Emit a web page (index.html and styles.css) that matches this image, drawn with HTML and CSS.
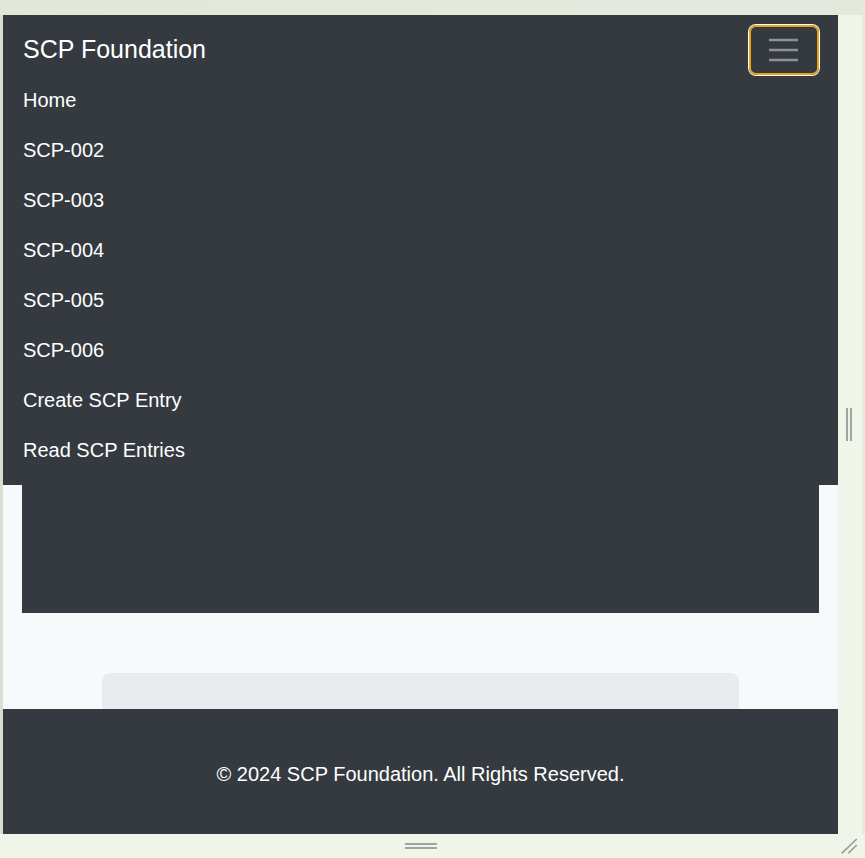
FILE: index.html
```html
<!DOCTYPE html>
<html lang="en">
<head>
<meta charset="utf-8">
<title>SCP Foundation</title>
<link rel="stylesheet" href="styles.css">
</head>
<body>
<div class="top-band"></div>
<div class="left-strip"></div>
<div class="page">
  <nav class="navbar">
    <div class="nav-head">
      <a class="brand" href="#">SCP Foundation</a>
      <button class="toggler" type="button" aria-label="Toggle navigation">
        <svg width="30" height="30" viewBox="0 0 30 30"><path d="M0 5h29M0 15h29M0 25h29" stroke="#8f9296" stroke-width="2.4"/></svg>
      </button>
    </div>
    <ul class="nav-list">
      <li><a href="#">Home</a></li>
      <li><a href="#">SCP-002</a></li>
      <li><a href="#">SCP-003</a></li>
      <li><a href="#">SCP-004</a></li>
      <li><a href="#">SCP-005</a></li>
      <li><a href="#">SCP-006</a></li>
      <li><a href="#">Create SCP Entry</a></li>
      <li><a href="#">Read SCP Entries</a></li>
    </ul>
  </nav>
  <div class="hero-wrap"><div class="hero"></div></div>
  <div class="card-wrap"><div class="card"></div></div>
  <footer class="footer">© 2024 SCP Foundation. All Rights Reserved.</footer>
</div>
<div class="gutter"><span class="vgrip"></span></div>
<div class="bottom-left"></div>
<div class="bottom-mid"><span class="hgrip"></span></div>
<div class="bottom-right">
  <svg width="27" height="24" viewBox="0 0 27 24"><path d="M3.7 19.3L18.7 5M10.3 19.3L18.7 11" stroke="#9a9a9a" stroke-width="1.6" fill="none"/></svg>
</div>
</body>
</html>
```

FILE: styles.css
```css
html, body {
  margin: 0;
  padding: 0;
}
body {
  width: 865px;
  height: 858px;
  overflow: hidden;
  background: #eff5e9;
  display: grid;
  grid-template-columns: 3px 835px 27px;
  grid-template-rows: 15px 819px 24px;
  font-family: "Liberation Sans", Arial, sans-serif;
}
.top-band {
  grid-column: 1 / 4;
  background: linear-gradient(90deg, #e1e7d9, #e3e9dc);
}
.left-strip {
  background: #d9dfd0;
}
.page {
  background: #f8f9fa;
  display: flex;
  flex-direction: column;
  overflow: hidden;
}
.navbar {
  background: #343a40;
  padding: 10px 20px;
}
.nav-head {
  display: flex;
  align-items: center;
  justify-content: space-between;
  height: 50px;
}
.brand {
  color: #fff;
  text-decoration: none;
  font-size: 25px;
  line-height: 37.5px;
}
.toggler {
  width: 70px;
  height: 50px;
  box-sizing: border-box;
  background: transparent;
  border: 2px solid #eea11a;
  border-radius: 7px;
  box-shadow: 0 0 0 1px #ffffff;
  display: flex;
  align-items: center;
  justify-content: center;
  padding: 0;
  margin-right: -1px;
}
.toggler svg {
  display: block;
}
.nav-list {
  list-style: none;
  margin: 0;
  padding: 0;
}
.nav-list a {
  display: block;
  padding: 10px 0;
  color: #fff;
  text-decoration: none;
  font-size: 20px;
  line-height: 30px;
}
.hero-wrap {
  padding: 0 19px;
}
.hero {
  background: #343a40;
  height: 128px;
}
.card-wrap {
  padding: 60px 99px 0;
}
.card {
  background: #e9ecef;
  height: 36px;
  border-radius: 8px 8px 0 0;
}
.footer {
  background: #343a40;
  color: #fff;
  text-align: center;
  font-size: 20px;
  line-height: 30px;
  padding: 50px 0 45px;
}
.gutter {
  background: #eff5e9;
  border-right: 3px solid #e3e9dc;
  display: flex;
  align-items: center;
  padding-left: 8px;
}
.vgrip {
  width: 2px;
  height: 33px;
  border-left: 2px solid #a2a2a2;
  border-right: 2px solid #a2a2a2;
}
.bottom-left {
  background: #eff5e9;
}
.bottom-mid {
  background: #eff5e9;
  display: flex;
  justify-content: center;
  padding-top: 9px;
}
.hgrip {
  width: 32px;
  height: 2px;
  border-top: 2px solid #a2a2a2;
  border-bottom: 2px solid #a2a2a2;
}
.bottom-right {
  background: #eff5e9;
  border-right: 3px solid #e3e9dc;
  margin-right: -3px;
}
.bottom-right svg {
  display: block;
}
```
